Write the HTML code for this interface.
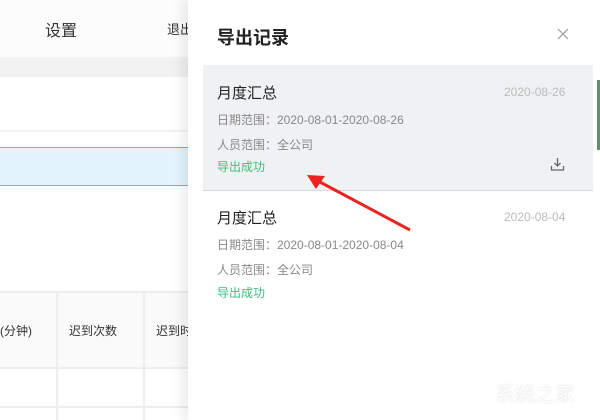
<!DOCTYPE html><html><head><meta charset="utf-8"><style>
*{margin:0;padding:0;box-sizing:border-box}
body{width:600px;height:420px;overflow:hidden;position:relative;background:#fff;font-family:"Liberation Sans","Noto Sans CJK SC",sans-serif}
.a{position:absolute}
.t{position:absolute;white-space:nowrap}
</style></head><body>
<div class="a" style="left:0;top:0;width:600px;height:57px;background:#fcfcfc"></div>
<div class="t" style="left:45px;top:17px;font-size:16px;color:#333">设置</div>
<div class="t" style="left:167px;top:19px;font-size:13px;color:#333">退出</div>
<div class="a" style="left:0;top:57px;width:600px;height:20px;background:#f2f2f2"></div>
<div class="a" style="left:0;top:130px;width:600px;height:2px;background:#f2f2f2"></div>
<div class="a" style="left:0;top:147px;width:600px;height:39px;background:#e3f4fc;border-top:1px solid #6fb3e6;border-bottom:1px solid #6fb3e6"></div>
<div class="a" style="left:0;top:291px;width:600px;height:78px;background:#fafafa;border-top:2px solid #eee;border-bottom:2px solid #eee"></div>
<div class="a" style="left:56px;top:291px;width:2px;height:129px;background:#eee"></div>
<div class="a" style="left:143px;top:291px;width:2px;height:129px;background:#eee"></div>
<div class="a" style="left:0;top:406px;width:600px;height:2px;background:#eee"></div>
<div class="t" style="left:0;top:322px;font-size:12px;color:#333">(分钟)</div>
<div class="t" style="left:69px;top:322px;font-size:12px;color:#333">迟到次数</div>
<div class="t" style="left:156px;top:322px;font-size:12px;color:#333">迟到时长</div>
<div class="a" style="left:188px;top:0;width:412px;height:420px;background:#fff;box-shadow:-6px 0 12px rgba(0,0,0,0.08)"></div>
<div class="t" style="left:217px;top:24px;font-size:18px;font-weight:bold;color:#222">导出记录</div>
<svg class="a" style="left:557px;top:28px" width="12" height="12"><path d="M1 1L11 11M11 1L1 11" stroke="#999" stroke-width="1.2"/></svg>
<div class="a" style="left:203px;top:65px;width:390px;height:126px;background:#f0f1f3;border-bottom:1px solid #d8d8d8"></div>
<div class="a" style="left:597px;top:80px;width:3px;height:70px;background:#6a8a70"></div>
<div class="t" style="left:217px;top:82px;font-size:15px;color:#222">月度汇总</div>
<div class="t" style="left:504px;top:85px;font-size:12px;color:#bbb">2020-08-26</div>
<div class="t" style="left:217px;top:111px;font-size:12px;color:#888">日期范围：2020-08-01-2020-08-26</div>
<div class="t" style="left:217px;top:136px;font-size:12px;color:#888">人员范围：全公司</div>
<div class="t" style="left:217px;top:158px;font-size:12px;color:#3cbf7c">导出成功</div>
<svg class="a" style="left:550px;top:157px" width="15" height="15"><path d="M7.5 1V9M4.5 6L7.5 9L10.5 6M1.5 9V13H13.5V9" stroke="#666" stroke-width="1.3" fill="none"/></svg>
<div class="t" style="left:217px;top:207px;font-size:15px;color:#222">月度汇总</div>
<div class="t" style="left:504px;top:210px;font-size:12px;color:#bbb">2020-08-04</div>
<div class="t" style="left:217px;top:236px;font-size:12px;color:#888">日期范围：2020-08-01-2020-08-04</div>
<div class="t" style="left:217px;top:261px;font-size:12px;color:#888">人员范围：全公司</div>
<div class="t" style="left:217px;top:284px;font-size:12px;color:#3cbf7c">导出成功</div>
<svg class="a" style="left:0;top:0" width="600" height="420"><path d="M410 230L318 181" stroke="#ee2222" stroke-width="3"/><path d="M307 175L325 176L316 189Z" fill="#ee2222"/></svg>
<div class="t" style="left:495px;top:378px;font-size:20px;color:rgba(255,255,255,0.9);text-shadow:0 0 2px #ddd">系统之家</div>
</body></html>
